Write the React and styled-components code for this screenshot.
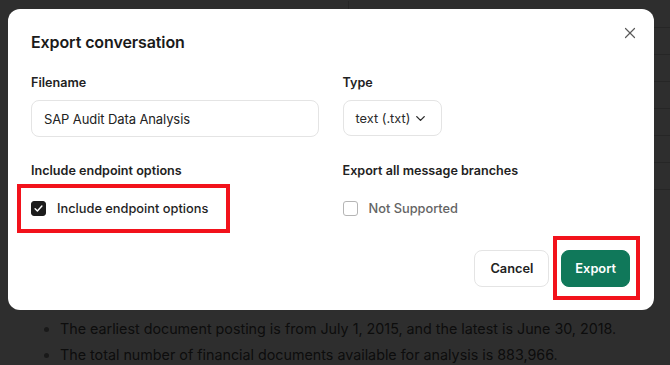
import styled, { createGlobalStyle } from 'styled-components';
import { X, ChevronDown } from 'lucide-react';

const GlobalStyle = createGlobalStyle`
  * { box-sizing: border-box; }
  body {
    margin: 0;
    font-family: 'Inter', 'Noto Sans', sans-serif;
    background: #ffffff;
    overflow: hidden;
  }
`;

/* page behind the modal */
const Page = styled.div`
  width: 670px;
  height: 365px;
  background: #ffffff;
  overflow: hidden;
`;

const Table = styled.div`
  margin: 1px 0 0 32px;
  width: 700px;
`;

const TableRow = styled.div`
  display: grid;
  grid-template-columns: 316px 1fr;
  height: 27px;
  border-bottom: 1px solid #d3d3d3;
`;

const TableCell = styled.div`
  border-left: ${(p) => (p.$first ? 'none' : '1px solid #d3d3d3')};
`;

const BulletList = styled.ul`
  margin: 126px 0 0;
  padding: 0 0 0 60px;
  list-style: disc;
  color: #4a4a4a;
  font-size: 14.3px;
  line-height: 26px;

  li::marker {
    color: #8a8a8a;
  }
`;

/* modal */
const Overlay = styled.div`
  position: fixed;
  inset: 0;
  background: rgba(0, 0, 0, 0.82);
  display: flex;
  align-items: flex-start;
  padding: 9px 0 0 8px;
`;

const Dialog = styled.div`
  position: relative;
  width: 646px;
  background: #ffffff;
  border-radius: 12px;
  padding: 22px 24px 23px 23px;
  display: flex;
  flex-direction: column;
`;

const Title = styled.h2`
  margin: 0;
  font-size: 16px;
  line-height: 22px;
  font-weight: 600;
  color: #1a1a1a;
  letter-spacing: -0.1px;
`;

const CloseButton = styled.button`
  position: absolute;
  top: 15px;
  right: 15px;
  width: 18px;
  height: 18px;
  padding: 0;
  border: none;
  background: none;
  color: #5a5a5a;
  display: flex;
  align-items: center;
  justify-content: center;
`;

const Grid = styled.div`
  display: grid;
  grid-template-columns: 1fr 1fr;
  column-gap: 24px;
  row-gap: 25px;
  margin-top: 21px;
`;

const Field = styled.div`
  display: flex;
  flex-direction: column;
  align-items: flex-start;
  gap: ${(p) => p.$gap || 8}px;
`;

const Label = styled.label`
  font-size: 12.6px;
  line-height: 18px;
  font-weight: 600;
  color: #222222;
`;

const TextInput = styled.div`
  width: 100%;
  height: 37px;
  border: 1px solid #e4e4e4;
  border-radius: 8px;
  padding: 0 12px;
  display: flex;
  align-items: center;
  font-size: 13px;
  letter-spacing: -0.1px;
  color: #222222;
`;

const Select = styled.div`
  width: 99px;
  height: 36px;
  border: 1px solid #e4e4e4;
  border-radius: 8px;
  padding: 0 13px 0 12px;
  display: flex;
  align-items: center;
  justify-content: space-between;
  font-size: 12.8px;
  color: #2a2a2a;
`;

const CheckRow = styled.div`
  position: relative;
  display: inline-flex;
  align-items: center;
  gap: 11px;
  height: 20px;

  &::after {
    content: '';
    display: ${(p) => (p.$marked ? 'block' : 'none')};
    position: absolute;
    top: -14px;
    bottom: -15px;
    left: -14px;
    right: -22px;
    border: 4px solid #f2121b;
    pointer-events: none;
  }
`;

const Box = styled.span`
  width: 15px;
  height: 15px;
  border-radius: 3px;
  background: ${(p) => (p.$checked ? '#1c1c1c' : '#ffffff')};
  border: 1.5px solid ${(p) => (p.$checked ? '#1c1c1c' : '#b5b5b5')};
  display: flex;
  align-items: center;
  justify-content: center;
`;

const CheckText = styled.span`
  font-size: 12.8px;
  font-weight: 500;
  color: ${(p) => (p.$muted ? '#646464' : '#1f1f1f')};
`;

const Footer = styled.div`
  display: flex;
  justify-content: flex-end;
  gap: 12px;
  margin-top: 32px;
`;

const Button = styled.button`
  position: relative;
  height: 37px;
  padding: 0 ${(p) => (p.$primary ? 13 : 15)}px;
  border-radius: 8px;
  border: 1px solid ${(p) => (p.$primary ? '#10785a' : '#e4e4e4')};
  background: ${(p) => (p.$primary ? '#10785a' : '#ffffff')};
  color: ${(p) => (p.$primary ? '#ffffff' : '#222222')};
  font-family: inherit;
  font-size: 12.8px;
  font-weight: 600;

  &::after {
    content: '';
    display: ${(p) => (p.$marked ? 'block' : 'none')};
    position: absolute;
    top: -15px;
    bottom: -14px;
    left: -9px;
    right: -11px;
    border: 4px solid #f2121b;
    pointer-events: none;
  }
`;

const Check = () => (
  <svg width="11" height="11" viewBox="0 0 12 12" fill="none">
    <path d="M2.3 6.3 4.8 8.7 9.7 3.4" stroke="#ffffff" strokeWidth="1.6" strokeLinecap="round" strokeLinejoin="round" />
  </svg>
);

const App = () => {
  const rows = Array.from({ length: 7 });

  return (
    <>
      <GlobalStyle />
      <Page>
        <Table>
          {rows.map((_, i) => (
            <TableRow key={i}>
              <TableCell $first />
              <TableCell />
            </TableRow>
          ))}
        </Table>
        <BulletList>
          <li>The earliest document posting is from July 1, 2015, and the latest is June 30, 2018.</li>
          <li>The total number of financial documents available for analysis is 883,966.</li>
        </BulletList>
      </Page>

      <Overlay>
        <Dialog>
          <Title>Export conversation</Title>
          <CloseButton aria-label="Close">
            <X size={18} strokeWidth={1.6} />
          </CloseButton>

          <Grid>
            <Field>
              <Label>Filename</Label>
              <TextInput>SAP Audit Data Analysis</TextInput>
            </Field>
            <Field>
              <Label>Type</Label>
              <Select>
                <span>text (.txt)</span>
                <ChevronDown size={15} strokeWidth={2.2} />
              </Select>
            </Field>

            <Field $gap={18}>
              <Label>Include endpoint options</Label>
              <CheckRow $marked>
                <Box $checked><Check /></Box>
                <CheckText>Include endpoint options</CheckText>
              </CheckRow>
            </Field>
            <Field $gap={18}>
              <Label>Export all message branches</Label>
              <CheckRow>
                <Box />
                <CheckText $muted>Not Supported</CheckText>
              </CheckRow>
            </Field>
          </Grid>

          <Footer>
            <Button>Cancel</Button>
            <Button $primary $marked>Export</Button>
          </Footer>
        </Dialog>
      </Overlay>
    </>
  );
};

export default App;
